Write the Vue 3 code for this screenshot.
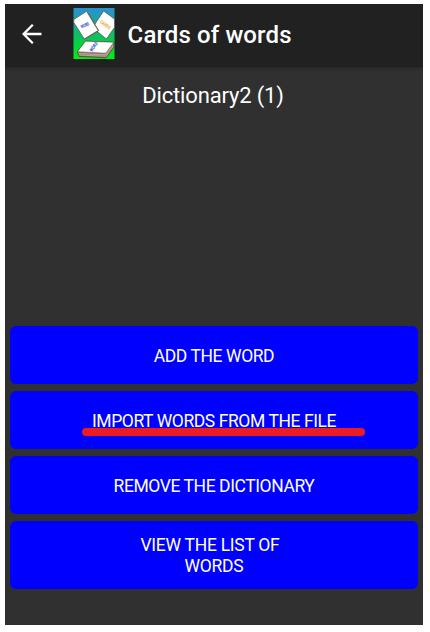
<script setup>
const actions = [
  { lines: ['ADD THE WORD'] },
  { lines: ['IMPORT WORDS FROM THE FILE'], marked: true },
  { lines: ['REMOVE THE DICTIONARY'] },
  { lines: ['VIEW THE LIST OF', 'WORDS'] },
]
</script>

<template>
  <main class="screen">
    <header class="bar">
      <svg class="back" width="20" height="20" viewBox="0 0 20 20" fill="none" stroke="#fff" stroke-width="2.3">
        <path d="M10.8 .8 1.6 10l9.2 9.2M1.8 10H19.5" />
      </svg>
      <svg class="logo" width="42" height="51" viewBox="0 0 42 51">
        <defs>
          <linearGradient id="sky" x1="0" y1="0" x2="0" y2="1">
            <stop offset="0" stop-color="#2b91d2" />
            <stop offset=".3" stop-color="#16a79a" />
            <stop offset=".65" stop-color="#08cc49" />
            <stop offset="1" stop-color="#00ee12" />
          </linearGradient>
        </defs>
        <rect x=".5" width="41" height="51" fill="url(#sky)" />
        <path d="M30.6 3 41.5 11V19.5L33.4 31 20.7 20.5V18Z" fill="#fff" stroke="#574b42" stroke-width=".7" />
        <path d="M.8 11.5 13.6 3.2 25.2 22.5 11.3 31 .8 14.5Z" fill="#fff" stroke="#574b42" stroke-width=".7" />
        <path d="M14.3 4 25.7 22.7 11.5 31.2" fill="none" stroke="#765a4c" stroke-width=".9" />
        <path d="M4.4 43.7 12.6 33.2 40.8 34.3 40.8 39.3 33.2 49.7 6 48.4Z" fill="#927a6b" stroke="#49372e" stroke-width=".7" />
        <path d="M4.4 43.7 12.6 33.2 40.8 34.3 32.8 45.2Z" fill="#fff" stroke="#58483e" stroke-width=".5" />
        <path d="M5.5 45.5 33 46.8 40.5 36.2M5.8 47 33.2 48.2 40.5 38" fill="none" stroke="#d5c4b8" stroke-width=".6" />
        <text class="tiny blue" transform="translate(8.5 20.5) rotate(-24)" textLength="9" lengthAdjust="spacingAndGlyphs">WORD</text>
        <text class="tiny gold" transform="translate(26.7 14.7) rotate(36)" textLength="11.5" lengthAdjust="spacingAndGlyphs">CARDS</text>
        <text class="tiny blue" transform="translate(19 44) rotate(-55)" textLength="10.5" lengthAdjust="spacingAndGlyphs">WORD</text>
      </svg>
      <h1>Cards of words</h1>
    </header>
    <h2>Dictionary2 (1)</h2>
    <div class="actions">
      <button v-for="a in actions" :key="a.lines[0]" :class="{ tall: a.lines.length > 1 }">
        <span v-for="(line, i) in a.lines" :key="line" :class="{ second: i > 0 }">{{ line }}</span>
        <i v-if="a.marked" class="mark"></i>
      </button>
    </div>
  </main>
</template>

<style>
body { background: #fff; }
</style>

<style scoped>
.screen {
  box-sizing: border-box;
  width: 418px;
  height: 621px;
  margin: 4px 0 0 5px;
  display: flex;
  flex-direction: column;
  background: #303030;
  color: #fff;
  font-family: Roboto, sans-serif;
}
.bar {
  display: flex;
  align-items: center;
  height: 63px;
  flex: none;
  background: #212121;
  box-shadow: 0 1px 3px #242424;
  clip-path: inset(0 0 -6px 0);
}
.back { margin: -4px 0 0 17px; }
.logo { margin: -4px 0 0 31px; }
.tiny { font: 700 4.8px Roboto, sans-serif; }
.blue { fill: #2448c8; }
.gold { fill: #eba424; }
h1 {
  margin: -1px 0 0 12.6px;
  font-size: 24px;
  line-height: 30px;
  font-weight: 500;
  letter-spacing: .12px;
  white-space: nowrap;
}
h2 {
  margin: 15px 0 0;
  padding-right: 2px;
  font-size: 22px;
  line-height: 28px;
  font-weight: 400;
  letter-spacing: -.16px;
  text-align: center;
}
.actions {
  display: flex;
  flex-direction: column;
  gap: 7px;
  margin: auto 5px 36.5px;
}
button {
  position: relative;
  box-sizing: border-box;
  display: flex;
  flex-direction: column;
  align-items: center;
  justify-content: center;
  height: 58px;
  padding: 2px 0 0;
  border: 0;
  border-radius: 6px;
  background: #0000fe;
  color: #fff;
  font: 400 17.5px/20px Roboto, sans-serif;
  letter-spacing: -.42px;
}
.tall { height: 67.5px; padding: 2px 8px 0 0; line-height: 20.5px; letter-spacing: -.27px; }
.second { padding-left: 8px; }
.mark {
  position: absolute;
  left: 72px;
  top: 37px;
  width: 283px;
  height: 8px;
  border-radius: 4px;
  background: #ed1c24;
}
</style>
